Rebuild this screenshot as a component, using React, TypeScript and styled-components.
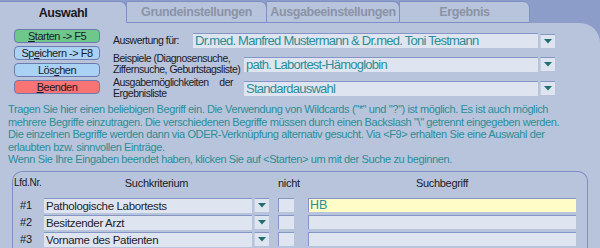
import styled, { createGlobalStyle } from 'styled-components';

const GlobalStyle = createGlobalStyle`
  html, body {
    margin: 0;
    padding: 0;
    background: #8c9dca;
    font-family: "Liberation Sans", Arial, sans-serif;
  }
`;

const Page = styled.div`
  width: 600px;
  height: 248px;
  overflow: hidden;
  display: flex;
  flex-direction: column;
`;

const TabBar = styled.div`
  display: flex;
  flex-shrink: 0;
  height: 23px;
  padding-top: 1px;
  box-sizing: border-box;
`;

const Tab = styled.div<{ $w: number; $active?: boolean }>`
  width: ${p => p.$w}px;
  box-sizing: border-box;
  background: #b8c4dc;
  border: 1px solid #7f8fc4;
  border-left: ${p => (p.$active ? 'none' : '1px solid #7f8fc4')};
  border-bottom: ${p => (p.$active ? 'none' : '1px solid #7f8fc4')};
  border-top-right-radius: 7px;
  display: flex;
  align-items: center;
  justify-content: center;
  font-size: 12.5px;
  letter-spacing: -0.4px;
  font-weight: bold;
  color: ${p => (p.$active ? '#1a1a22' : '#8a93a8')};
  margin-left: ${p => (p.$active ? 0 : -1)}px;
`;

const Panel = styled.div`
  flex: 1;
  min-height: 0;
  background: #b8c4dc;
  border-top-right-radius: 20px;
  padding: 6px 0 0 0;
`;

const TopSection = styled.div`
  display: flex;
`;

const ButtonColumn = styled.div`
  display: flex;
  flex-direction: column;
  gap: 3px;
  padding-left: 14px;
  width: 86px;
`;

const Button = styled.div<{ $bg: string }>`
  height: 14px;
  box-sizing: border-box;
  border: 1px solid #6c7cae;
  border-radius: 4px;
  background: ${p => p.$bg};
  font-size: 11px;
  letter-spacing: -0.5px;
  line-height: 12px;
  text-align: center;
  color: #1a1a28;
`;

const FieldColumn = styled.div`
  display: flex;
  flex-direction: column;
  padding-left: 13px;
`;

const FieldRow = styled.div<{ $h: number }>`
  display: flex;
  align-items: center;
  height: ${p => p.$h}px;
`;

const Label = styled.div<{ $w: number; $justify?: boolean }>`
  width: ${p => p.$w}px;
  flex-shrink: 0;
  font-size: 10.5px;
  letter-spacing: -0.5px;
  line-height: 11.5px;
  color: #1a1a28;
  text-align: ${p => (p.$justify ? 'justify' : 'left')};
  white-space: ${p => (p.$justify ? 'normal' : 'nowrap')};
`;

const Select = styled.div<{ $w: number; $offset?: number }>`
  width: ${p => p.$w}px;
  flex-shrink: 0;
  margin-left: ${p => p.$offset ?? 0}px;
  height: 15px;
  display: flex;
  align-items: center;
  gap: 2px;
`;

const SelectValue = styled.div<{ $teal?: boolean; $small?: boolean }>`
  flex: 1;
  height: 100%;
  box-sizing: border-box;
  background: #dfe5f0;
  border-top: 1px solid #8596c6;
  padding-left: 2px;
  font-size: ${p => (p.$small ? 11.5 : 13)}px;
  letter-spacing: ${p => (p.$small ? -0.35 : -0.75)}px;
  line-height: 14px;
  color: ${p => (p.$teal ? '#2a8e98' : '#1e1e2a')};
  white-space: nowrap;
  overflow: hidden;
`;

const ArrowBox = styled.div`
  width: 15px;
  height: 14px;
  box-sizing: border-box;
  background: #dfe5f0;
  border-top: 1px solid #8596c6;
  border-left: 1px solid #c8d0e4;
  display: flex;
  align-items: center;
  justify-content: center;
`;

const HelpText = styled.div`
  padding: 3px 0 0 8px;
  font-size: 11px;
  letter-spacing: -0.38px;
  line-height: 12.5px;
  color: #2a8e98;
  white-space: nowrap;
`;

const GroupBox = styled.div`
  margin: 5px 12px 0 12px;
  height: 80px;
  border: 1px solid #7f8fc4;
  border-bottom: none;
  border-radius: 10px 10px 0 0;
  padding: 0 0 0 1px;
`;

const GridRow = styled.div<{ $h: number }>`
  display: grid;
  grid-template-columns: 30px 225px 9px 16px 14px 268px;
  align-items: center;
  height: ${p => p.$h}px;
  margin-bottom: 3px;
`;

const HeadCell = styled.div<{ $small?: boolean; $center?: boolean }>`
  font-size: ${p => (p.$small ? 10 : 11)}px;
  letter-spacing: -0.3px;
  color: #1a1a28;
  text-align: ${p => (p.$center ? 'center' : 'left')};
  white-space: nowrap;
  align-self: ${p => (p.$small ? 'start' : 'center')};
  padding-top: ${p => (p.$small ? 5 : 0)}px;
`;

const RowNo = styled.div`
  font-size: 11px;
  color: #1a1a28;
  padding-left: 6px;
`;

const Check = styled.div`
  width: 16px;
  height: 14px;
  box-sizing: border-box;
  background: #dfe5f0;
  border-top: 1px solid #8596c6;
  border-left: 1px solid #8596c6;
`;

const Input = styled.div<{ $bg: string }>`
  height: 14px;
  box-sizing: border-box;
  background: ${p => p.$bg};
  border-top: 1px solid #8596c6;
  border-left: 1px solid #8596c6;
  font-size: 12.5px;
  line-height: 13px;
  color: #2a8e98;
  padding-left: 1px;
`;

const U = styled.span`
  text-decoration: underline;
`;

const Arrow = () => (
  <ArrowBox>
    <svg width="8" height="5" viewBox="0 0 8 5">
      <polygon points="0,0 8,0 4,4.5" fill="#1f6f72" />
    </svg>
  </ArrowBox>
);

const rows = [
  { no: '#1', crit: 'Pathologische Labortests', term: 'HB', bg: '#fffcc8' },
  { no: '#2', crit: 'Besitzender Arzt', term: '', bg: '#dfe5f0' },
  { no: '#3', crit: 'Vorname des Patienten', term: '', bg: '#dfe5f0' },
];

export default function App() {
  return (
    <Page>
      <GlobalStyle />
      <TabBar>
        <Tab $w={127} $active>Auswahl</Tab>
        <Tab $w={141}>Grundeinstellungen</Tab>
        <Tab $w={134}>Ausgabeeinstellungen</Tab>
        <Tab $w={131}>Ergebnis</Tab>
      </TabBar>
      <Panel>
        <TopSection>
          <ButtonColumn>
            <Button $bg="#6ec88c"><U>S</U>tarten -&gt; F5</Button>
            <Button $bg="#a9d2f4">Sp<U>e</U>ichern -&gt; F8</Button>
            <Button $bg="#a9d2f4">Lös<U>c</U>hen</Button>
            <Button $bg="#f87373"><U>B</U>eenden</Button>
          </ButtonColumn>
          <FieldColumn>
            <FieldRow $h={23}>
              <Label $w={80}>Auswertung für:</Label>
              <Select $w={362}>
                <SelectValue $teal>Dr.med. Manfred Mustermann &amp; Dr.med. Toni Testmann</SelectValue>
                <Arrow />
              </Select>
            </FieldRow>
            <FieldRow $h={24}>
              <Label $w={131}>Beispiele (Diagnosensuche,<br />Ziffernsuche, Geburtstagsliste)</Label>
              <Select $w={311}>
                <SelectValue $teal>path. Labortest-Hämoglobin</SelectValue>
                <Arrow />
              </Select>
            </FieldRow>
            <FieldRow $h={24}>
              <Label $w={120} $justify>Ausgabemöglichkeiten der Ergebnisliste</Label>
              <Select $w={311} $offset={11}>
                <SelectValue $teal>Standardauswahl</SelectValue>
                <Arrow />
              </Select>
            </FieldRow>
          </FieldColumn>
        </TopSection>
        <HelpText>
          Tragen Sie hier einen beliebigen Begriff ein. Die Verwendung von Wildcards ("*" und "?") ist möglich. Es ist auch möglich<br />
          mehrere Begriffe einzutragen. Die verschiedenen Begriffe müssen durch einen Backslash "\" getrennt eingegeben werden.<br />
          Die einzelnen Begriffe werden dann via ODER-Verknüpfung alternativ gesucht. Via &lt;F9&gt; erhalten Sie eine Auswahl der<br />
          erlaubten bzw. sinnvollen Einträge.<br />
          Wenn Sie Ihre Eingaben beendet haben, klicken Sie auf &lt;Starten&gt; um mit der Suche zu beginnen.
        </HelpText>
        <GroupBox>
          <GridRow $h={23}>
            <HeadCell $small>Lfd.Nr.</HeadCell>
            <HeadCell $center>Suchkriterium</HeadCell>
            <div />
            <HeadCell $center>nicht</HeadCell>
            <div />
            <HeadCell $center>Suchbegriff</HeadCell>
          </GridRow>
          {rows.map(r => (
            <GridRow $h={14} key={r.no}>
              <RowNo>{r.no}</RowNo>
              <Select $w={225}>
                <SelectValue $small>{r.crit}</SelectValue>
                <Arrow />
              </Select>
              <div />
              <Check />
              <div />
              <Input $bg={r.bg}>{r.term}</Input>
            </GridRow>
          ))}
        </GroupBox>
      </Panel>
    </Page>
  );
}
